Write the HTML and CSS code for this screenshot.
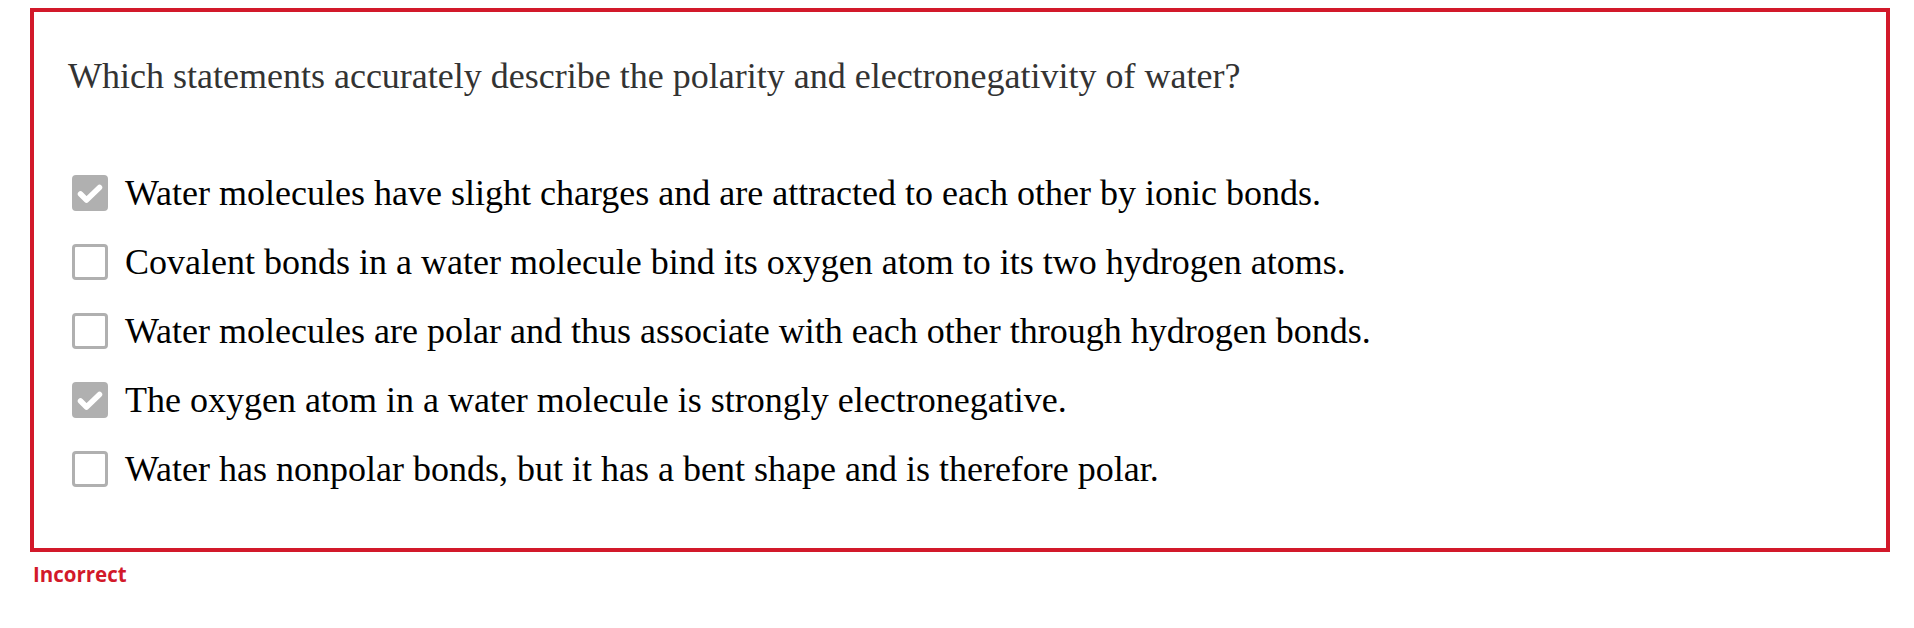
FILE: index.html
```html
<!DOCTYPE html>
<html lang="en">
<head>
<meta charset="utf-8">
<title>Question</title>
<link rel="stylesheet" href="styles.css">
</head>
<body>
<div class="question-box">
  <p class="prompt">Which statements accurately describe the polarity and electronegativity of water?</p>
  <ul class="options">
    <li class="option">
      <span class="check checked"><svg viewBox="0 0 36 36" width="36" height="36"><path d="M8.5 19 L14.5 25 L27.5 12.5" fill="none" stroke="#fff" stroke-width="5.5" stroke-linecap="round" stroke-linejoin="round"/></svg></span>
      <span class="label">Water molecules have slight charges and are attracted to each other by ionic bonds.</span>
    </li>
    <li class="option">
      <span class="check"></span>
      <span class="label">Covalent bonds in a water molecule bind its oxygen atom to its two hydrogen atoms.</span>
    </li>
    <li class="option">
      <span class="check"></span>
      <span class="label">Water molecules are polar and thus associate with each other through hydrogen bonds.</span>
    </li>
    <li class="option">
      <span class="check checked"><svg viewBox="0 0 36 36" width="36" height="36"><path d="M8.5 19 L14.5 25 L27.5 12.5" fill="none" stroke="#fff" stroke-width="5.5" stroke-linecap="round" stroke-linejoin="round"/></svg></span>
      <span class="label">The oxygen atom in a water molecule is strongly electronegative.</span>
    </li>
    <li class="option">
      <span class="check"></span>
      <span class="label">Water has nonpolar bonds, but it has a bent shape and is therefore polar.</span>
    </li>
  </ul>
</div>
<div class="feedback">Incorrect</div>
</body>
</html>
```
FILE: styles.css
```css
html, body {
  margin: 0;
  padding: 0;
  background: #fff;
}
body {
  padding: 8px 0 0 30px;
}
.question-box {
  box-sizing: border-box;
  width: 1860px;
  height: 544px;
  border: 4.5px solid #d2192a;
  padding: 42px 0 0 34px;
}
.prompt {
  margin: 0;
  font-family: "Liberation Serif", "Times New Roman", serif;
  font-size: 36px;
  line-height: 44px;
  color: #333;
}
.options {
  list-style: none;
  margin: 77px 0 0 0;
  padding: 0 0 0 4px;
  display: flex;
  flex-direction: column;
  gap: 33px;
}
.option {
  display: flex;
  align-items: flex-start;
  gap: 17px;
  height: 36px;
}
.check {
  box-sizing: border-box;
  flex: 0 0 36px;
  width: 36px;
  height: 36px;
  border: 3.5px solid #b0b0b0;
  border-radius: 4px;
  background: #fff;
  position: relative;
}
.check.checked {
  background: #b0b0b0;
  border-color: #b0b0b0;
}
.check svg {
  position: absolute;
  left: -3.5px;
  top: -3.5px;
}
.label {
  margin-top: -2px;
  font-family: "Liberation Serif", "Times New Roman", serif;
  font-size: 36px;
  line-height: 40px;
  color: #000;
  white-space: nowrap;
}
.feedback {
  margin: 8px 0 0 3px;
  font-family: "Open Sans", "Noto Sans", sans-serif;
  font-weight: 700;
  font-size: 20.5px;
  color: #d2192a;
}
```
